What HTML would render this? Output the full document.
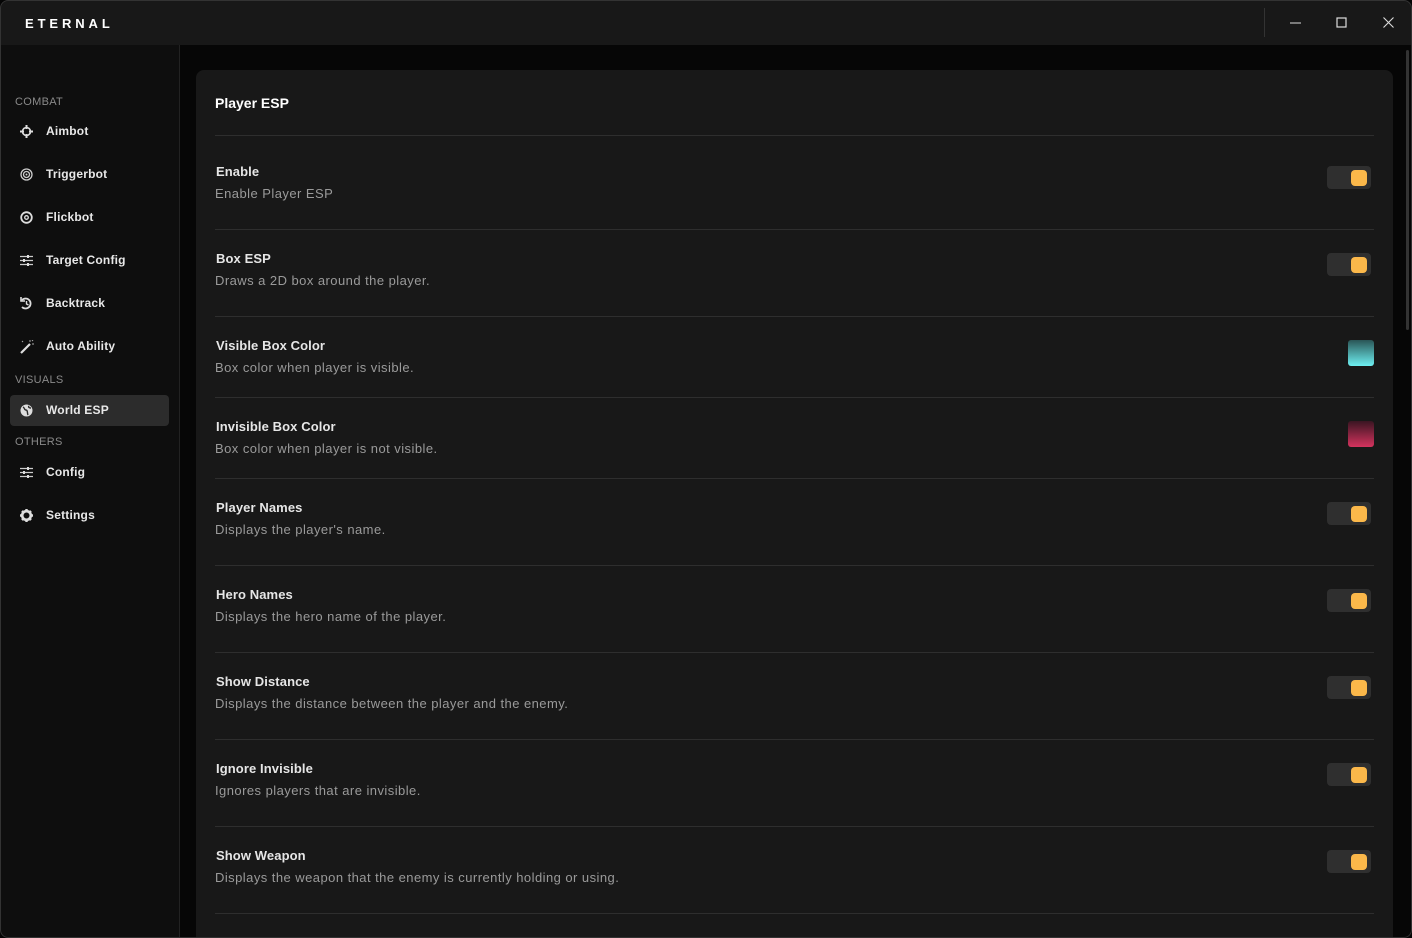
<!DOCTYPE html>
<html><head><style>
*{margin:0;padding:0;box-sizing:border-box}
body{width:1412px;height:938px;background:#050505;font-family:"Liberation Sans",sans-serif;overflow:hidden;position:relative;color:#eee}
.win{position:absolute;inset:0;border-radius:8px;overflow:hidden;background:#060606}
.frame{position:absolute;inset:0;border:1px solid #333;border-radius:8px;pointer-events:none;z-index:5}
.title{position:absolute;left:0;top:0;width:1412px;height:45px;background:#181818}
.logo{position:absolute;left:25px;top:16px;font-size:13px;font-weight:bold;letter-spacing:3.9px;color:#fff}
.sep{position:absolute;left:1264px;top:8px;width:1px;height:29px;background:#333}
.side{position:absolute;left:0;top:45px;width:180px;height:893px;background:#0e0e0e;border-right:1px solid #222}
.sec{position:absolute;left:15px;font-size:11px;color:#8a8a8a;letter-spacing:.3px}
.item{position:absolute;left:10px;width:159px;height:31px;font-size:12px;font-weight:bold;color:#e8e8e8;padding-left:36px;line-height:31px;border-radius:4px;letter-spacing:.2px}
.item.act{background:#2c2c2c}
.item svg{position:absolute;left:10px;top:9px}
.card{position:absolute;left:196px;top:70px;width:1197px;height:880px;background:#181818;border-radius:8px}
.h{position:absolute;left:19px;top:25px;font-size:14px;font-weight:bold;color:#fff}
.div{position:absolute;left:19px;width:1159px;height:1px;background:#2e2e2e}
.t{position:absolute;left:20px;font-size:13px;font-weight:bold;color:#e6e6e6;letter-spacing:.1px}
.d{position:absolute;left:19px;font-size:13px;color:#9a9a9a;letter-spacing:.45px}
.tg{position:absolute;left:1131px;width:44px;height:23px;background:#2f2f2f;border-radius:4px}
.tg i{position:absolute;left:24px;top:4px;width:16px;height:16px;background:#fbb84a;border-radius:4px}
.sw{position:absolute;left:1152px;width:26px;height:26px;border-radius:3px}
.scroll{position:absolute;left:1406px;top:50px;width:3px;height:280px;background:#333;border-radius:2px}
</style></head><body><div class="win">
<div class="title"><div class="logo">ETERNAL</div><div class="sep"></div>
<svg style="position:absolute;left:1290px;top:17px" width="12" height="12"><line x1="0" y1="6" x2="11" y2="6" stroke="#ddd"/></svg>
<svg style="position:absolute;left:1336px;top:17px" width="12" height="12"><rect x="1" y="1" width="9" height="9" fill="none" stroke="#ddd" stroke-width="1.2"/></svg>
<svg style="position:absolute;left:1383px;top:17px" width="12" height="12"><path d="M0.5 0.5L10.5 10.5M10.5 0.5L0.5 10.5" stroke="#ddd" stroke-width="1.1"/></svg>
</div>
<div class="side">
<div class="sec" style="top:51px">COMBAT</div>
<div class="item" style="top:71px"><svg width="13" height="13" viewBox="0 0 13 13"><circle cx="6.5" cy="6.5" r="4" fill="none" stroke="#ddd" stroke-width="1.6"/><path d="M6.5 0v4M6.5 9v4M0 6.5h4M9 6.5h4" stroke="#ddd" stroke-width="2"/></svg>Aimbot</div>
<div class="item" style="top:114px"><svg width="13" height="13" viewBox="0 0 13 13"><circle cx="6.5" cy="6.5" r="5.5" fill="none" stroke="#ccc" stroke-width="1.3"/><circle cx="6.5" cy="6.5" r="3" fill="none" stroke="#ccc" stroke-width="1.3"/><circle cx="6.5" cy="6.5" r="1" fill="#ccc"/></svg>Triggerbot</div>
<div class="item" style="top:157px"><svg width="13" height="13" viewBox="0 0 13 13"><circle cx="6.5" cy="6.5" r="5.3" fill="none" stroke="#ddd" stroke-width="1.8"/><circle cx="6.5" cy="6.5" r="1.8" fill="none" stroke="#ddd" stroke-width="1.3"/></svg>Flickbot</div>
<div class="item" style="top:200px"><svg width="13" height="13" viewBox="0 0 13 13"><path d="M0 2.5h13M0 6.5h13M0 10.5h13" stroke="#ccc" stroke-width="1.3"/><rect x="7" y="1" width="2" height="3" fill="#ddd"/><rect x="3" y="5" width="2" height="3" fill="#ddd"/><rect x="7" y="9" width="2" height="3" fill="#ddd"/></svg>Target Config</div>
<div class="item" style="top:243px"><svg width="13" height="13" viewBox="0 0 13 13"><path d="M2 3A5 5 0 1 1 2 10" fill="none" stroke="#ddd" stroke-width="1.8"/><path d="M1 0v4h4" fill="none" stroke="#ddd" stroke-width="1.6"/><path d="M6.5 4v3l2 1" fill="none" stroke="#ddd" stroke-width="1.4"/></svg>Backtrack</div>
<div class="item" style="top:286px"><svg width="14" height="14" viewBox="0 0 14 14"><path d="M1 13L10 4" stroke="#ddd" stroke-width="2.2"/><path d="M10 0v2M12 4h2M2 1l1 1M12 1l1-1" stroke="#aaa" stroke-width="1"/></svg>Auto Ability</div>
<div class="sec" style="top:329px">VISUALS</div>
<div class="item act" style="top:350px"><svg width="13" height="13" viewBox="0 0 13 13"><circle cx="6.5" cy="6.5" r="6" fill="#ddd"/><path d="M3 3c2 1 1 3 3 3s1 3 2 5M9 2c-1 1 0 2 2 2" fill="none" stroke="#2c2c2c" stroke-width="1.4"/></svg>World ESP</div>
<div class="sec" style="top:391px">OTHERS</div>
<div class="item" style="top:412px"><svg width="13" height="13" viewBox="0 0 13 13"><path d="M0 2.5h13M0 6.5h13M0 10.5h13" stroke="#ccc" stroke-width="1.3"/><rect x="7" y="1" width="2" height="3" fill="#ddd"/><rect x="3" y="5" width="2" height="3" fill="#ddd"/><rect x="7" y="9" width="2" height="3" fill="#ddd"/></svg>Config</div>
<div class="item" style="top:455px"><svg width="13" height="13" viewBox="0 0 13 13"><circle cx="6.5" cy="6.5" r="4.3" fill="none" stroke="#ddd" stroke-width="2.6"/><path d="M6.5 0v13M0 6.5h13M2 2l9 9M11 2l-9 9" stroke="#ddd" stroke-width="2.4" stroke-dasharray="2.2 8.6 2.2 20"/></svg>Settings</div>
</div>
<div class="scroll"></div>
<div class="card">
<div class="h">Player ESP</div>
<div class="div" style="top:65px"></div>
<div class="t" style="top:94px">Enable</div><div class="d" style="top:116px">Enable Player ESP</div><div class="tg" style="top:96px"><i></i></div>
<div class="div" style="top:159px"></div>
<div class="t" style="top:181px">Box ESP</div><div class="d" style="top:203px">Draws a 2D box around the player.</div><div class="tg" style="top:183px"><i></i></div>
<div class="div" style="top:246px"></div>
<div class="t" style="top:268px">Visible Box Color</div><div class="d" style="top:290px">Box color when player is visible.</div><div class="sw" style="top:270px;background:linear-gradient(#2a5556,#6ef0f2)"></div>
<div class="div" style="top:327px"></div>
<div class="t" style="top:349px">Invisible Box Color</div><div class="d" style="top:371px">Box color when player is not visible.</div><div class="sw" style="top:351px;background:linear-gradient(#3a1522,#d4335e)"></div>
<div class="div" style="top:408px"></div>
<div class="t" style="top:430px">Player Names</div><div class="d" style="top:452px">Displays the player's name.</div><div class="tg" style="top:432px"><i></i></div>
<div class="div" style="top:495px"></div>
<div class="t" style="top:517px">Hero Names</div><div class="d" style="top:539px">Displays the hero name of the player.</div><div class="tg" style="top:519px"><i></i></div>
<div class="div" style="top:582px"></div>
<div class="t" style="top:604px">Show Distance</div><div class="d" style="top:626px">Displays the distance between the player and the enemy.</div><div class="tg" style="top:606px"><i></i></div>
<div class="div" style="top:669px"></div>
<div class="t" style="top:691px">Ignore Invisible</div><div class="d" style="top:713px">Ignores players that are invisible.</div><div class="tg" style="top:693px"><i></i></div>
<div class="div" style="top:756px"></div>
<div class="t" style="top:778px">Show Weapon</div><div class="d" style="top:800px">Displays the weapon that the enemy is currently holding or using.</div><div class="tg" style="top:780px"><i></i></div>
<div class="div" style="top:843px"></div>
</div>
<div class="frame"></div>
</div></body></html>
